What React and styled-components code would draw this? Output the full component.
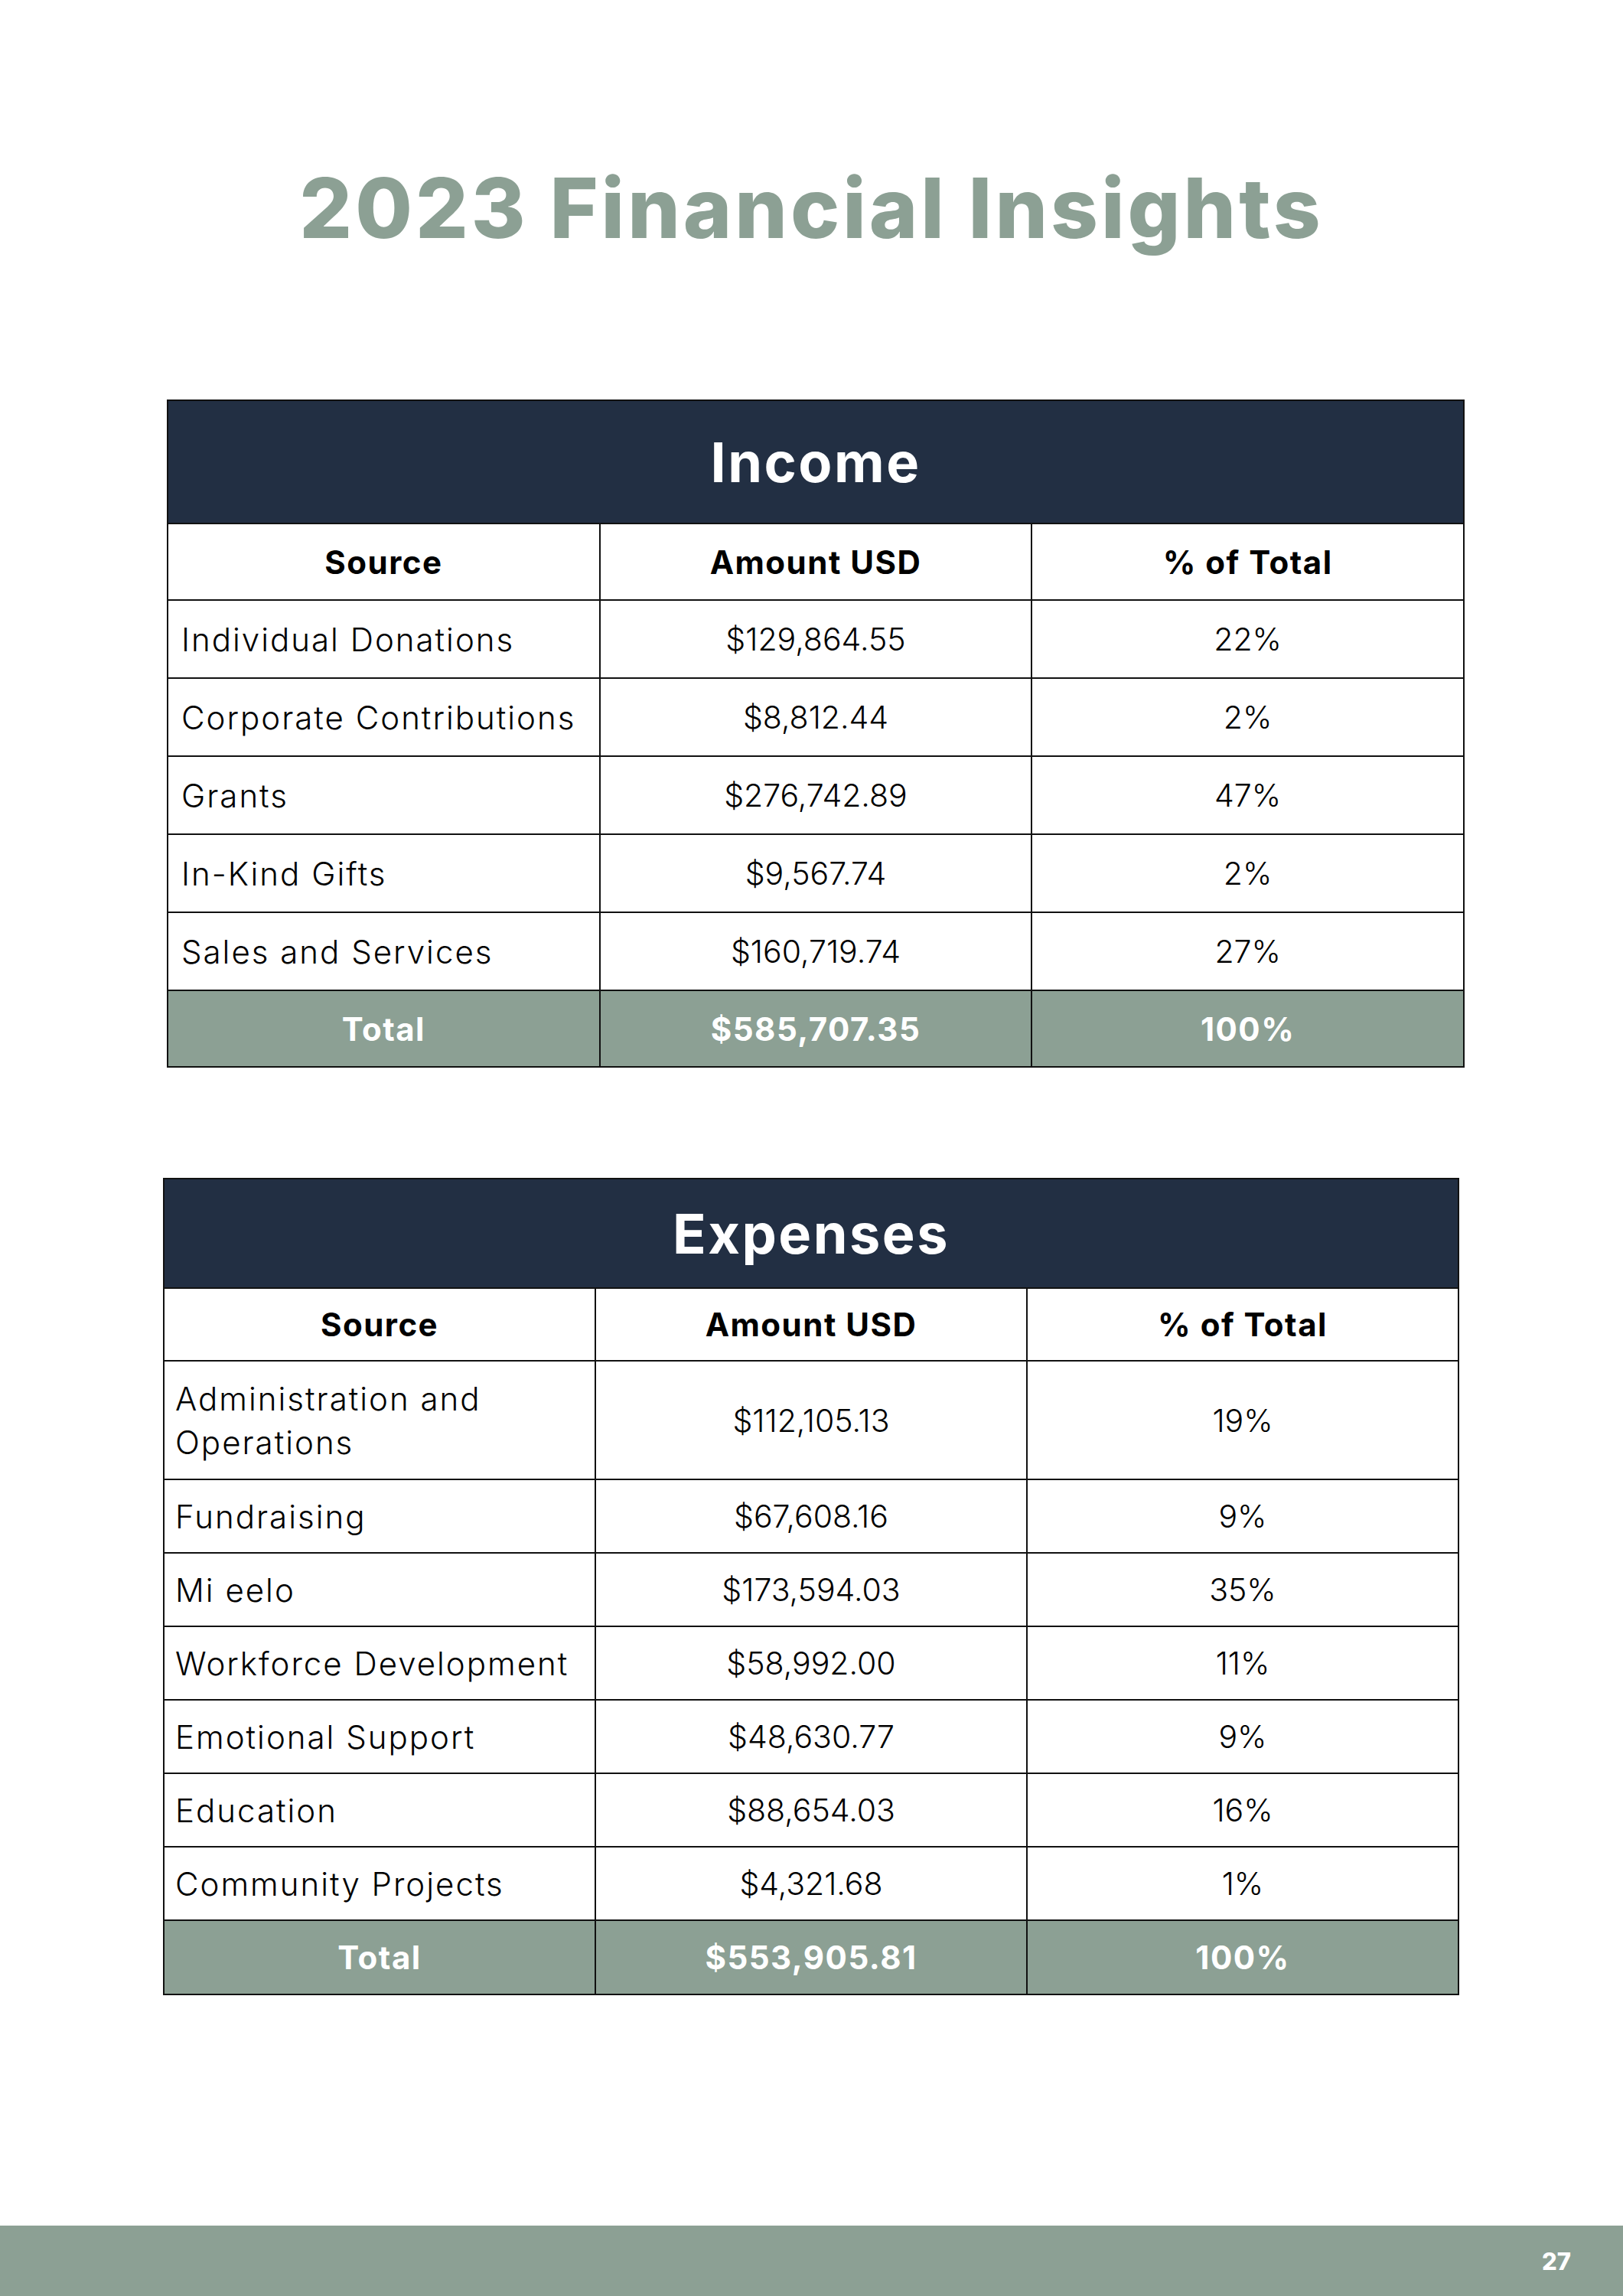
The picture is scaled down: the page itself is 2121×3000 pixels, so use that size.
import styled, { createGlobalStyle } from "styled-components";

const income = [
  ["Individual Donations", "$129,864.55", "22%"],
  ["Corporate Contributions", "$8,812.44", "2%"],
  ["Grants", "$276,742.89", "47%"],
  ["In-Kind Gifts", "$9,567.74", "2%"],
  ["Sales and Services", "$160,719.74", "27%"],
];

const expenses = [
  [["Administration and", "Operations"], "$112,105.13", "19%"],
  ["Fundraising", "$67,608.16", "9%"],
  ["Mi eelo", "$173,594.03", "35%"],
  ["Workforce Development", "$58,992.00", "11%"],
  ["Emotional Support", "$48,630.77", "9%"],
  ["Education", "$88,654.03", "16%"],
  ["Community Projects", "$4,321.68", "1%"],
];

const FinanceTable = ({ title, rows, total, layout }) => (
  <Table $left={layout.left} $top={layout.top} $width={layout.width}>
    <thead>
      <tr>
        <TitleCell colSpan={3} $h={layout.titleH}>{title}</TitleCell>
      </tr>
      <tr>
        <ColHead $h={layout.headH}>Source</ColHead>
        <ColHead $h={layout.headH}>Amount USD</ColHead>
        <ColHead $h={layout.headH}>% of Total</ColHead>
      </tr>
    </thead>
    <tbody>
      {rows.map(([source, amount, pct]) => {
        const lines = Array.isArray(source) ? source : [source];
        const h = lines.length > 1 ? layout.tallH : layout.rowH;
        return (
          <tr key={amount}>
            <SourceCell $h={h} $pad={layout.pad}>
              {lines.map((l) => (
                <Line key={l}>{l}</Line>
              ))}
            </SourceCell>
            <Cell $h={h}>{amount}</Cell>
            <Cell $h={h}>{pct}</Cell>
          </tr>
        );
      })}
      <tr>
        <TotalCell $h={layout.totalH}>Total</TotalCell>
        <TotalCell $h={layout.totalH}>{total}</TotalCell>
        <TotalCell $h={layout.totalH}>100%</TotalCell>
      </tr>
    </tbody>
  </Table>
);

const App = () => {
  return (
    <>
      <GlobalStyle />
      <Page>
        <Title>2023 Financial Insights</Title>
        <FinanceTable
          title="Income"
          rows={income}
          total="$585,707.35"
          layout={{ left: 218, top: 196, width: 1696, titleH: 159, headH: 98, rowH: 100, tallH: 100, totalH: 98, pad: 17 }}
        />
        <FinanceTable
          title="Expenses"
          rows={expenses}
          total="$553,905.81"
          layout={{ left: 213, top: 144, width: 1694, titleH: 141, headH: 93, rowH: 94, tallH: 153, totalH: 95, pad: 14 }}
        />
        <Footer>
          <PageNum>27</PageNum>
        </Footer>
      </Page>
    </>
  );
};

export default App;

const GlobalStyle = createGlobalStyle`
  body {
    margin: 0;
    background: #ffffff;
    font-family: Inter, "Liberation Sans", sans-serif;
  }
`;

const Page = styled.div`
  width: 2121px;
  min-height: 3000px;
  display: flex;
  flex-direction: column;
  background: #ffffff;
`;

const Title = styled.h1`
  margin: 218px 0 0;
  text-align: center;
  font-family: Inter, sans-serif;
  font-size: 108px;
  line-height: 1;
  font-weight: 800;
  letter-spacing: 4px;
  color: #8ca094;
`;

const Table = styled.table`
  border-collapse: collapse;
  table-layout: fixed;
  width: ${(p) => p.$width}px;
  margin: ${(p) => p.$top}px 0 0 ${(p) => p.$left}px;
  font-family: Inter, sans-serif;
  color: #000;
  th, td {
    border: 2px solid #111;
    padding: 0;
  }
`;

const TitleCell = styled.th`
  height: ${(p) => p.$h}px;
  background: #222f43;
  color: #ffffff;
  font-size: 72px;
  font-weight: 700;
  letter-spacing: 2.5px;
  text-align: center;
  vertical-align: middle;
`;

const ColHead = styled.th`
  height: ${(p) => p.$h}px;
  font-size: 42px;
  font-weight: 700;
  letter-spacing: 1.5px;
  text-align: center;
  vertical-align: middle;
`;

const Cell = styled.td`
  height: ${(p) => p.$h}px;
  font-size: 41px;
  font-weight: 300;
  letter-spacing: 0;
  text-align: center;
  vertical-align: middle;
  white-space: nowrap;
`;

const SourceCell = styled(Cell)`
  text-align: left;
  font-size: 42px;
  letter-spacing: 2px;
  padding-left: ${(p) => p.$pad}px !important;
`;

const Line = styled.div`
  line-height: 57px;
`;

const TotalCell = styled.td`
  height: ${(p) => p.$h}px;
  background: #8ca094;
  color: #ffffff;
  font-size: 42px;
  font-weight: 700;
  letter-spacing: 1.5px;
  text-align: center;
  vertical-align: middle;
`;

const Footer = styled.footer`
  margin-top: auto;
  height: 92px;
  background: #8ca094;
  display: flex;
  align-items: center;
  justify-content: flex-end;
  padding-right: 68px;
`;

const PageNum = styled.span`
  font-family: Inter, sans-serif;
  font-size: 31px;
  font-weight: 800;
  color: #ffffff;
`;
